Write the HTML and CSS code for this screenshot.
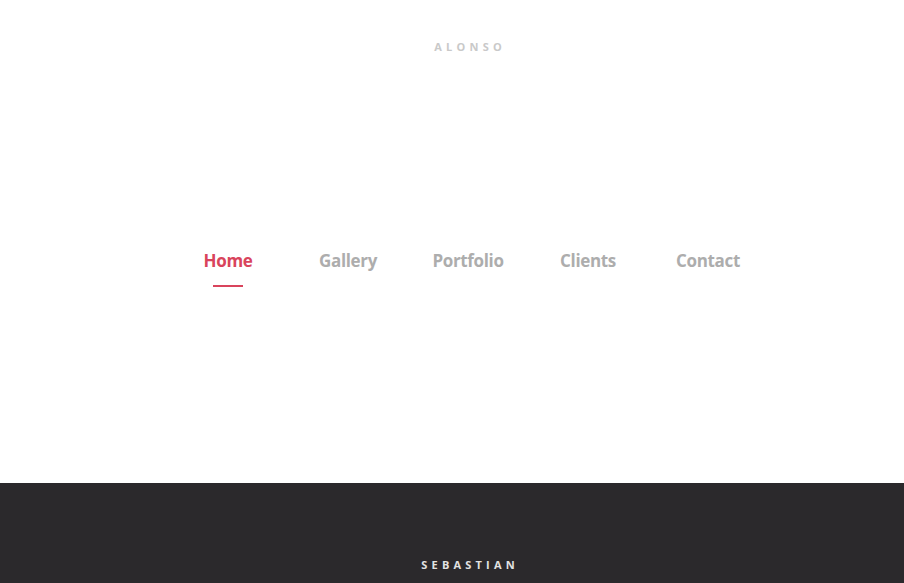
FILE: index.html
```html
<!DOCTYPE html>
<html>
<head>
<meta charset="utf-8">
<link rel="stylesheet" href="styles.css">
</head>
<body>
<div class="page">
  <header class="hero">
    <div class="brand">ALONSO</div>
    <nav class="nav">
      <a class="nav-item active">Home</a>
      <a class="nav-item">Gallery</a>
      <a class="nav-item">Portfolio</a>
      <a class="nav-item">Clients</a>
      <a class="nav-item">Contact</a>
    </nav>
  </header>
  <footer class="footer">
    <div class="footer-name">SEBASTIAN</div>
  </footer>
</div>
</body>
</html>
```
FILE: styles.css
```css
html, body {
  margin: 0;
  padding: 0;
  background: #ffffff;
  overflow: hidden;
}
.page {
  font-family: "Open Sans", "Noto Sans", sans-serif;
  padding-left: 32px;
}
.hero {
  height: 483px;
  display: flex;
  flex-direction: column;
  align-items: center;
  box-sizing: border-box;
  padding-top: 40px;
}
.brand {
  font-size: 11px;
  font-weight: 700;
  letter-spacing: 4.2px;
  color: #c9c9c9;
  line-height: 14px;
  padding-left: 4.2px;
}
.nav {
  display: flex;
  margin-top: 195px;
}
.nav-item {
  width: 120px;
  text-align: center;
  font-size: 17px;
  font-weight: 700;
  color: #adadad;
  line-height: 24px;
  position: relative;
  letter-spacing: -0.35px;
}
.nav-item.active {
  color: #d9445c;
}
.nav-item.active::after {
  content: "";
  position: absolute;
  left: 45px;
  width: 30px;
  height: 2px;
  top: 36px;
  background: #d9445c;
}
.footer {
  margin-left: -32px;
  padding-left: 32px;
  background: #2b292c;
  height: 100px;
  display: flex;
  justify-content: center;
  padding-top: 75px;
  box-sizing: border-box;
}
.footer-name {
  font-size: 11px;
  font-weight: 700;
  letter-spacing: 4.2px;
  padding-left: 4.2px;
  color: #e2e2e2;
  line-height: 14px;
}
```
